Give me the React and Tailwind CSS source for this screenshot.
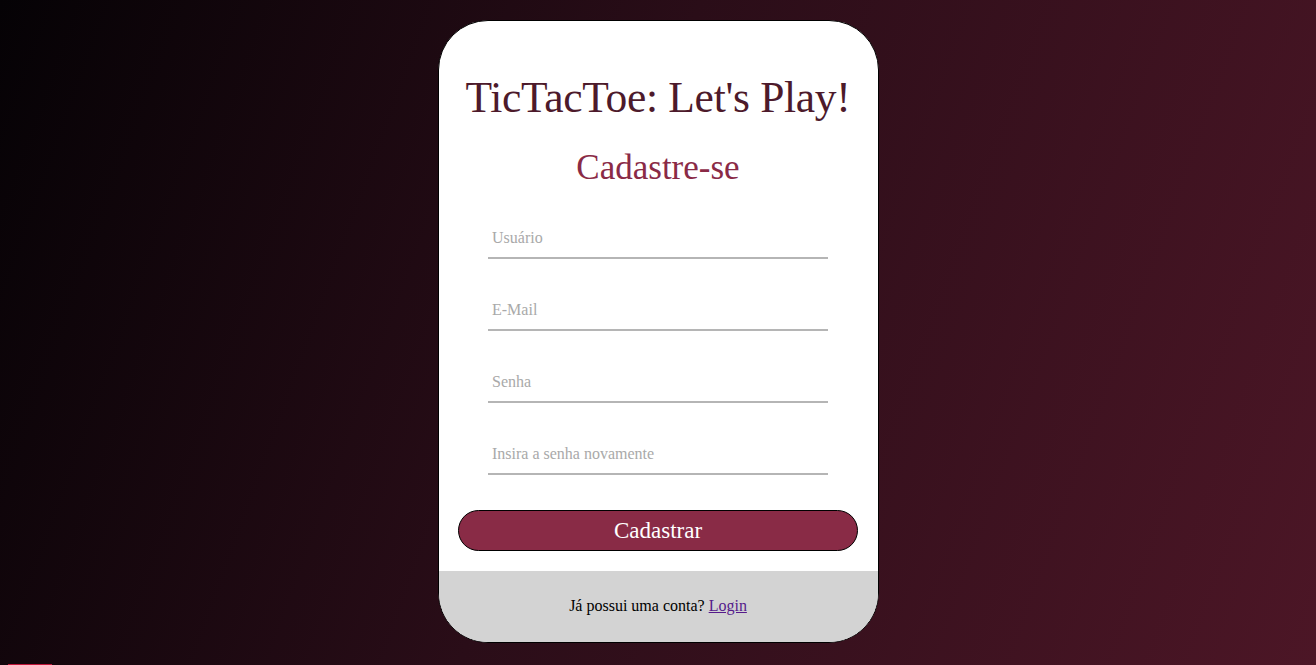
import React from "react";

const fields = ["Usuário", "E-Mail", "Senha", "Insira a senha novamente"];

export default function App() {
  return (
    <div className="relative w-full h-[665px] overflow-hidden bg-[linear-gradient(110deg,#050205_0%,#2a0d18_45%,#4c1626_100%)] flex justify-center pt-5 font-['Liberation_Serif',serif]">
      <div className="w-[441px] h-[623px] rounded-[50px] border border-black bg-white overflow-hidden flex flex-col">
        <div className="flex-1 flex flex-col items-center">
          <h1 className="mt-[48px] text-[43.5px] leading-[56px] text-[#4d1a2b] tracking-[-0.3px]">
            TicTacToe: Let's Play!
          </h1>
          <h2 className="mt-[23px] text-[35px] leading-[40px] text-[#8a2a46]">Cadastre-se</h2>
          <form className="mt-[30px] flex flex-col gap-[31px] w-[340px]">
            {fields.map((f) => (
              <input
                key={f}
                type={f.startsWith("Senha") || f.startsWith("Insira") ? "password" : "text"}
                placeholder={f}
                className="h-[41px] px-1 border-b-2 border-[#b5b5b5] text-[16px] outline-none placeholder:text-[#a9a9a9] font-['Liberation_Serif',serif]"
              />
            ))}
          </form>
          <button className="mt-[35px] w-[400px] h-[41px] rounded-full border border-black bg-[#892b46] text-white text-[23px] leading-none">
            Cadastrar
          </button>
        </div>
        <div className="h-[71px] bg-[#d3d3d3] flex items-center justify-center text-[16px] text-black pb-[1px]">
          <span>
            Já possui uma conta?{" "}
            <a href="#" className="text-[#551a8b] underline">
              Login
            </a>
          </span>
        </div>
      </div>
      <div className="absolute left-2 bottom-0 w-[44px] h-[1px] bg-[#c0163a]" />
    </div>
  );
}
